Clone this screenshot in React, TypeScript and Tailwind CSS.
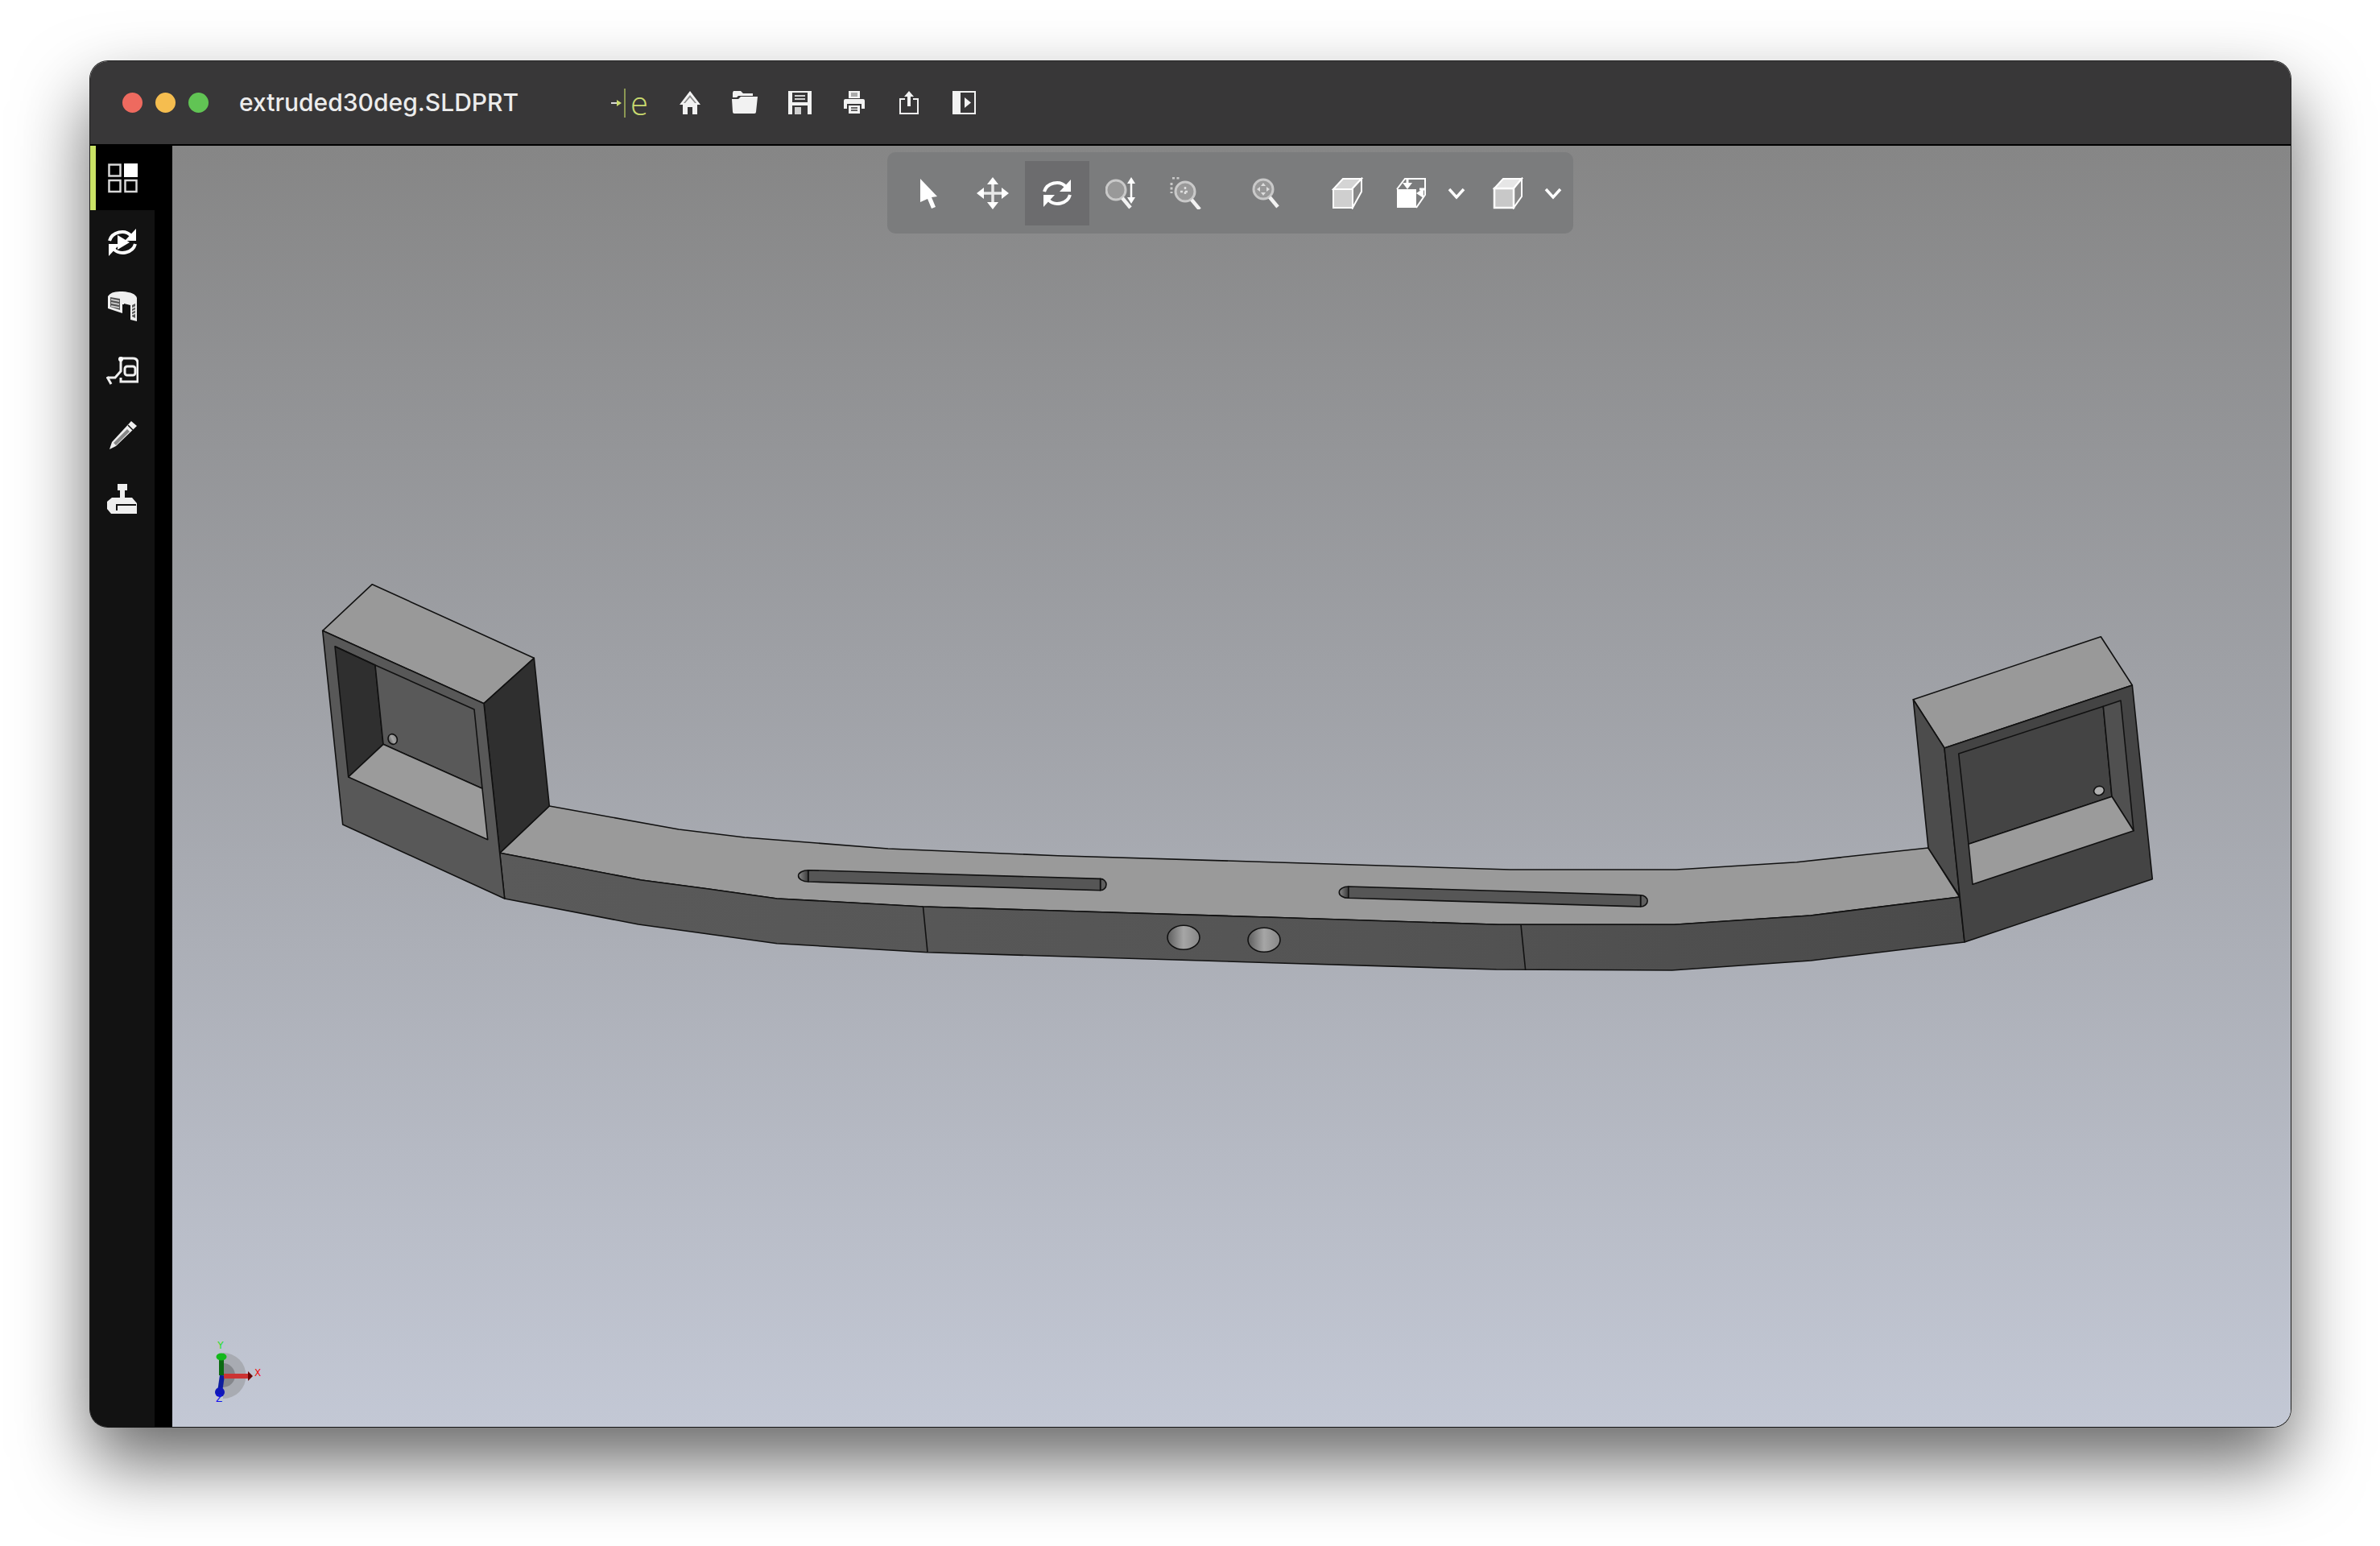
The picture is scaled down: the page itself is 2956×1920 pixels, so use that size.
const edge = { stroke: "#111", strokeWidth: 1.6, strokeLinejoin: "round" as const };

function Rotate({ play }: { play?: boolean }) {
  return (
    <svg viewBox="0 0 40 40" className="h-10 w-10">
      <path d="M4 18C7 7 23 3 31 12" fill="none" stroke="#fff" strokeWidth="4" />
      <polygon points="37,3 37,18 23,18" fill="#fff" />
      <path d="M36 22C33 33 17 37 9 28" fill="none" stroke="#fff" strokeWidth="4" />
      <polygon points="3,37 3,22 17,22" fill="#fff" />
      {play && <polygon points="14,11 29,20 14,29" fill="#fff" />}
    </svg>
  );
}

function Glass({ cx, cy, children }: { cx: number; cy: number; children?: React.ReactNode }) {
  return (
    <>
      <circle cx={cx} cy={cy} r="12" fill="#999" stroke="#c9c9c9" strokeWidth="3" />
      <line x1={cx + 8} y1={cy + 10} x2={cx + 18} y2={cy + 22} stroke="#f2f2f2" strokeWidth="4.5" />
      {children}
    </>
  );
}

const toolIcons = {
  pointer: (
    <svg viewBox="0 0 40 40" className="h-10 w-10">
      <polygon points="10,2 31,24 24,25 29,37 24,39 19,27 10,31" fill="#fff" />
    </svg>
  ),
  move: (
    <svg viewBox="0 0 40 40" className="h-10 w-10">
      <path d="M20 6V34M6 20H34" stroke="#e8e8e8" strokeWidth="3.5" />
      <polygon points="20,0 27,9 13,9" fill="#fff" />
      <polygon points="20,40 27,31 13,31" fill="#fff" />
      <polygon points="0,20 9,13 9,27" fill="#fff" />
      <polygon points="40,20 31,13 31,27" fill="#fff" />
    </svg>
  ),
  zoomFit: (
    <svg viewBox="0 0 40 40" className="h-10 w-10">
      <Glass cx={13} cy={16} />
      <path d="M32 4V28" stroke="#fff" strokeWidth="2.5" />
      <polygon points="32,0 37,8 27,8" fill="#fff" />
      <polygon points="32,33 37,25 27,25" fill="#fff" />
    </svg>
  ),
  zoomArea: (
    <svg viewBox="0 0 40 40" className="h-10 w-10">
      <Glass cx={19} cy={18} />
      <path d="M3 1H14M2 7V20" stroke="#c9c9c9" strokeWidth="3" strokeDasharray="3 2.5" />
      <path d="M13 18H25M19 12V24" stroke="#ddd" strokeWidth="2.5" strokeDasharray="3 3" />
    </svg>
  ),
  zoom: (
    <svg viewBox="0 0 40 40" className="h-10 w-10">
      <Glass cx={16} cy={15} />
      <polygon points="16,7 19,11 13,11" fill="#ddd" />
      <polygon points="16,23 19,19 13,19" fill="#ddd" />
      <polygon points="8,15 12,12 12,18" fill="#ddd" />
      <polygon points="24,15 20,12 20,18" fill="#ddd" />
    </svg>
  ),
  cube: (
    <svg viewBox="0 0 40 40" className="h-10 w-10">
      <polygon points="2,15 14,2 37,2 25,15" fill="#d4d4d4" stroke="#fff" strokeWidth="2" />
      <polygon points="25,15 37,2 37,18 26,38" fill="#888" stroke="#fff" strokeWidth="2" />
      <rect x="2" y="15" width="24" height="23" fill="#cfcfcf" stroke="#fff" strokeWidth="2" />
    </svg>
  ),
  viewBox: (
    <svg viewBox="0 0 40 40" className="h-10 w-10">
      <path d="M2 15L12 2H37V22L26 38" fill="none" stroke="#fff" strokeWidth="2" />
      <rect x="2" y="15" width="24" height="23" fill="#fff" />
      <path d="M15 1V12M30 15H37" stroke="#fff" strokeWidth="3" />
      <polygon points="9,7 21,7 15,15" fill="#fff" />
      <polygon points="26,20 35,14 35,26" fill="#fff" />
    </svg>
  ),
  cubeAlt: (
    <svg viewBox="0 0 40 40" className="h-10 w-10">
      <polygon points="3,14 14,2 37,2 27,14" fill="#e6e6e6" stroke="#fff" strokeWidth="2" />
      <polygon points="27,14 37,2 37,24 27,38" fill="#8a8a8a" stroke="#fff" strokeWidth="2" />
      <rect x="3" y="14" width="24" height="24" fill="#c8c8c8" stroke="#fff" strokeWidth="2.5" />
    </svg>
  ),
};

function Chevron() {
  return (
    <svg viewBox="0 0 24 24" className="h-6 w-6">
      <path d="M3 7L12 17L21 7" fill="none" stroke="#fff" strokeWidth="3.5" />
    </svg>
  );
}

function ToolButton({ icon, active, className }: { icon: React.ReactNode; active?: boolean; className?: string }) {
  return (
    <div className={`flex h-[80px] w-[80px] items-center justify-center ${active ? "bg-[#6c6c6e]" : ""} ${className ?? ""}`}>
      {icon}
    </div>
  );
}

function Toolbar() {
  return (
    <div className="absolute left-[888px] top-[8px] flex h-[101px] w-[852px] items-center rounded-[10px] bg-[#7b7c7d] pl-[11px]">
      <ToolButton icon={toolIcons.pointer} />
      <ToolButton icon={toolIcons.move} />
      <ToolButton icon={<Rotate />} active />
      <ToolButton icon={toolIcons.zoomFit} />
      <ToolButton icon={toolIcons.zoomArea} />
      <ToolButton icon={toolIcons.zoom} className="ml-[20px]" />
      <ToolButton icon={toolIcons.cube} className="ml-[21px]" />
      <ToolButton icon={toolIcons.viewBox} className="-ml-px" />
      <div className="flex w-[32px] justify-center"><Chevron /></div>
      <ToolButton icon={toolIcons.cubeAlt} className="ml-[8px]" />
      <div className="flex w-[32px] justify-center"><Chevron /></div>
    </div>
  );
}

const titleIcons = [
  <svg key="home" viewBox="0 0 28 29" className="h-[29px] w-[28px]">
    <path d="M14 0L27 17H23V29H17V20H11V29H5V17H1Z" fill="#f2f2f2" />
    <path d="M14 5L22 15H20L14 8L8 15H6Z" fill="#8a8a8a" />
  </svg>,
  <svg key="folder" viewBox="0 0 34 28" className="h-[28px] w-[34px]">
    <path d="M3 0H12L15 3H27V6H9L7 8H2V2Z" fill="#f2f2f2" />
    <path d="M1 10H9L12 7H33L31 26Q31 28 29 28H4Q2 28 2 26Z" fill="#f2f2f2" />
  </svg>,
  <svg key="save" viewBox="0 0 29 29" className="h-[29px] w-[29px]">
    <path d="M0 0H29V29H0Z" fill="#f2f2f2" />
    <rect x="5" y="2" width="19" height="12" fill="#383738" />
    <rect x="8" y="5" width="13" height="2" fill="#d0d0d0" />
    <rect x="8" y="9" width="13" height="2" fill="#d0d0d0" />
    <rect x="5" y="18" width="19" height="11" fill="#383738" />
    <rect x="8" y="20" width="8" height="9" fill="#d0d0d0" />
  </svg>,
  <svg key="print" viewBox="0 0 26 28" className="h-[28px] w-[26px]">
    <path d="M6 0H20V9H6Z" fill="#f2f2f2" />
    <rect x="9" y="2" width="8" height="5" fill="#aaa" />
    <path d="M2 10H24Q26 10 26 12V22H22V16H4V22H0V12Q0 10 2 10Z" fill="#f2f2f2" />
    <path d="M6 18H20V28H6Z" fill="#f2f2f2" />
    <path d="M9 21H17M9 24H17" stroke="#383738" strokeWidth="1.5" />
  </svg>,
  <svg key="share" viewBox="0 0 24 29" className="h-[29px] w-[24px]">
    <path d="M12 0L18 7H14V19H10V7H6Z" fill="#f2f2f2" />
    <path d="M7 10H1V28H23V10H17" fill="none" stroke="#f2f2f2" strokeWidth="2" />
  </svg>,
  <svg key="panel" viewBox="0 0 29 29" className="h-[29px] w-[29px]">
    <rect x="1" y="1" width="27" height="27" fill="none" stroke="#f2f2f2" strokeWidth="2" />
    <rect x="1" y="1" width="9" height="27" fill="#f2f2f2" />
    <polygon points="15,8 23,14.500 15,21" fill="#f2f2f2" />
  </svg>,
];

function TitleBar() {
  return (
    <div className="flex h-[105px] shrink-0 items-center border-b-2 border-black bg-[#383738] pl-[40px]">
      <div className="flex gap-[16px]">
        <div className="h-[25px] w-[25px] rounded-full bg-[#ee6a5f]" />
        <div className="h-[25px] w-[25px] rounded-full bg-[#f5bd4f]" />
        <div className="h-[25px] w-[25px] rounded-full bg-[#61c454]" />
      </div>
      <span className="ml-[38px] w-[462px] font-['Inter',sans-serif] text-[30px] font-medium text-[#ececec]">
        extruded30deg.SLDPRT
      </span>
      <div className="flex items-center">
        <svg viewBox="0 0 18 36" className="h-[36px] w-[18px]">
          <path d="M0 18H9" stroke="#d8d8d8" strokeWidth="2" />
          <polygon points="7,14 13,18 7,22" fill="#cbdc6e" />
          <path d="M17 0V36" stroke="#a9b85c" strokeWidth="1.5" />
        </svg>
        <span className="ml-[6px] w-[28px] font-['Open_Sans',sans-serif] text-[40px] font-light leading-none text-[#c8d96f]">e</span>
      </div>
      <div className="ml-[12px] flex">
        {titleIcons.map((icon) => (
          <div key={icon.key} className="flex w-[68px] justify-center">{icon}</div>
        ))}
      </div>
    </div>
  );
}

const sideIcons = [
  <svg key="grid" viewBox="0 0 40 40" className="h-10 w-10">
    <rect x="3.500" y="3.500" width="14" height="14" fill="none" stroke="#d8d8d8" strokeWidth="2.500" />
    <rect x="22" y="2" width="17" height="17" fill="#fff" />
    <rect x="3.500" y="23" width="14" height="14" fill="none" stroke="#d8d8d8" strokeWidth="2.500" />
    <rect x="23.500" y="23" width="14" height="14" fill="none" stroke="#d8d8d8" strokeWidth="2.500" />
  </svg>,
  <Rotate key="sync" play />,
  <svg key="section" viewBox="0 0 40 40" className="h-10 w-10">
    <path d="M2 7Q6 0 20 1Q36 2 38 9V38L30 36L29 20L24 17H20V28L2 22Z" fill="#efefef" />
    <path d="M5 8L17 10V24L5 20Z" fill="#555" />
    <path d="M6 11L16 13M6 15L16 17M6 19L16 21" stroke="#ddd" strokeWidth="1.500" />
    <path d="M32 18L36 16V34L32 32Z" fill="#555" />
    <path d="M32 22L36 20M32 26L36 24M32 30L36 28" stroke="#ddd" strokeWidth="1.500" />
    <path d="M22 16L30 18V36L22 32Z" fill="#121212" />
  </svg>,
  <svg key="measure" viewBox="0 0 40 40" className="h-10 w-10">
    <path d="M2 28H11L18 20V4H33Q39 4 39 10V33H18V28" fill="none" stroke="#efefef" strokeWidth="3" />
    <rect x="23" y="14" width="13" height="11" rx="3" fill="none" stroke="#efefef" strokeWidth="3" />
    <circle cx="18" cy="5" r="3" fill="#fff" />
    <path d="M1 27L6 36" stroke="#efefef" strokeWidth="3" />
  </svg>,
  <svg key="pencil" viewBox="0 0 40 40" className="h-10 w-10">
    <path d="M31 2L38 8L12 33L4 37L7 28Z" fill="#efefef" />
    <path d="M9 29L12 32L29 15L26 12Z" fill="#888" />
    <path d="M27 7L33 13" stroke="#121212" strokeWidth="1.500" />
  </svg>,
  <svg key="stamp" viewBox="0 0 40 40" className="h-10 w-10">
    <rect x="14" y="0" width="12" height="8" fill="#efefef" />
    <rect x="17" y="8" width="6" height="9" fill="#efefef" />
    <path d="M7 17H32L38 24V37H6L1 31V22Z" fill="#efefef" />
    <rect x="12" y="25" width="25" height="8" fill="#121212" />
    <rect x="14" y="27" width="24" height="6" fill="#efefef" />
  </svg>,
];

function Sidebar() {
  return (
    <div className="flex w-[102px] shrink-0 bg-black">
      <div className="flex w-[80px] flex-col bg-[#121212]">
        {sideIcons.map((icon, i) => (
          <div
            key={icon.key}
            className={`flex h-[80px] items-center justify-center ${i === 0 ? "border-l-[7px] border-[#c9e265] bg-black pr-[7px]" : ""}`}
          >
            {icon}
          </div>
        ))}
      </div>
    </div>
  );
}

function Slot({ x1, x2, y1, y2, capL, capR }: { x1: number; x2: number; y1: number; y2: number; capL: number; capR: number }) {
  const h = 14.3;
  return (
    <g>
      <path
        d={`M${x1} ${y1}A${x1 - capL} ${h / 2} 0 0 0 ${x1} ${y1 + h}Z`}
        fill="url(#capGrad)"
        {...edge}
      />
      <path
        d={`M${x2} ${y2}A${capR - x2} ${h / 2} 0 0 1 ${x2} ${y2 + h}Z`}
        fill="#5f5f5f"
        {...edge}
      />
      <polygon points={`${x1},${y1} ${x2},${y2} ${x2},${y2 + h} ${x1},${y1 + h}`} fill="#565656" {...edge} />
    </g>
  );
}

function Triad() {
  return (
    <g>
      <path d="M277 1680A28 28 0 0 1 277 1737Z" fill="#a8abb2" />
      <path d="M277 1693A15 15 0 0 1 277 1723Z" fill="#85878c" />
      <path d="M276 1708L273 1729" stroke="#0d1d9e" strokeWidth="6" />
      <path d="M275 1685V1708" stroke="#0c6a12" strokeWidth="6" />
      <ellipse cx="275" cy="1685" rx="6.500" ry="4.500" fill="#14b81c" />
      <circle cx="273" cy="1729" r="6" fill="#1018b8" />
      <rect x="278" y="1706" width="30" height="6" fill="#c33" />
      <polygon points="308,1703 314,1709 308,1715" fill="#6e0606" />
      <text x="274" y="1675" textAnchor="middle" fontFamily="'DejaVu Sans',sans-serif" fontSize="12" fill="#1fe01f">Y</text>
      <text x="320" y="1709" textAnchor="middle" fontFamily="'DejaVu Sans',sans-serif" fontSize="12" fill="#ee1111">X</text>
      <text x="272" y="1741" textAnchor="middle" fontFamily="'DejaVu Sans',sans-serif" fontSize="12" fill="#1111ee">Z</text>
    </g>
  );
}

function Model() {
  return (
    <svg viewBox="214 181 2631 1591" className="block h-full w-full">
      <defs>
        <linearGradient id="capGrad" x1="0" x2="1" y1="0" y2="0">
          <stop offset="0" stopColor="#8a8a8a" />
          <stop offset="1" stopColor="#3a3a3a" />
        </linearGradient>
        <linearGradient id="beamGrad" gradientUnits="userSpaceOnUse" x1="620" x2="2440" y1="0" y2="0">
          <stop offset="0" stopColor="#5a5a5a" />
          <stop offset="0.6" stopColor="#545454" />
          <stop offset="1" stopColor="#4a4a4a" />
        </linearGradient>
        <linearGradient id="holeGrad" x1="0" x2="1" y1="0" y2="0">
          <stop offset="0" stopColor="#5e5e5e" />
          <stop offset="0.5" stopColor="#a6a6a6" />
          <stop offset="1" stopColor="#868686" />
        </linearGradient>
      </defs>

      {/* beam */}
      <polygon
        points="682.300,1001 843,1030 925,1040 1103,1054 1314,1062.700 1580,1070.700 1875.700,1080 2082,1080 2231.600,1070.700 2395,1053 2433.700,1114 2249,1137 2079.500,1148.300 1861,1148.300 1580,1139.300 1146.500,1126 965,1116 880,1104 796.700,1093 620.700,1059.300"
        fill="#9a9a9a"
        {...edge}
      />
      <polygon
        points="620.700,1059.300 796.700,1093 880,1104 965,1116 1146.500,1126 1580,1139.300 1861,1148.300 2079.500,1148.300 2249,1137 2433.700,1114 2440,1170 2249,1193 2076.600,1205 1858.500,1204 1580,1195.700 1152,1182.700 965,1171.700 880,1160 793,1148 626.700,1116"
        fill="url(#beamGrad)"
        {...edge}
      />
      <line x1="1146.500" y1="1126" x2="1152" y2="1182.700" {...edge} />
      <line x1="1889" y1="1148.700" x2="1894.700" y2="1205" {...edge} />
      <Slot x1={1004} y1={1080.700} x2={1366.600} y2={1091.400} capL={991.600} capR={1374} />
      <Slot x1={1674.800} y1={1101} x2={2037.600} y2={1111.700} capL={1663.300} capR={2046.200} />
      <ellipse cx="1470" cy="1164.300" rx="20" ry="15" fill="url(#holeGrad)" {...edge} />
      <ellipse cx="1570" cy="1167.300" rx="20" ry="15" fill="url(#holeGrad)" {...edge} />

      {/* left box */}
      <polygon points="400.700,783.300 462.300,725.700 663.300,817.300 601,873.700" fill="#999" {...edge} />
      <polygon points="601,873.700 663.300,817.300 682.300,1001 620.700,1059.300" fill="#2f2f2f" {...edge} />
      <polygon points="400.700,783.300 601,873.700 620.700,1059.300 626.700,1116 425.700,1024" fill="#585858" {...edge} />
      <polygon points="416,802.700 466,826 476,924.300 432.700,965" fill="#2f2f2f" {...edge} />
      <polygon points="466,826 589,881 599,979.300 476,924.300" fill="#595959" {...edge} />
      <polygon points="476,924.300 599,979.300 605.700,1042.700 432.700,965" fill="#9b9b9b" {...edge} />
      <line x1="416" y1="802.700" x2="466" y2="826" {...edge} />
      <ellipse cx="487.700" cy="918" rx="5.500" ry="6.500" transform="rotate(-25 487.700 918)" fill="url(#holeGrad)" {...edge} />

      {/* right box */}
      <polygon points="2376.300,868.700 2609.300,790.700 2648.300,851 2415,929" fill="#999" {...edge} />
      <polygon points="2376.300,868.700 2415,929 2434,1113.300 2395,1053.300" fill="#4c4c4c" {...edge} />
      <polygon points="2415,929 2648.300,851 2673.300,1091.700 2440,1170" fill="#444" {...edge} />
      <polygon points="2432.700,936 2612.300,877.300 2623,989.300 2445,1048.300" fill="#444" {...edge} />
      <polygon points="2612.300,877.300 2634,870 2650,1031.700 2623,989.300" fill="#505050" {...edge} />
      <polygon points="2445,1048.300 2623,989.300 2650,1031.700 2450,1098.300" fill="#9b9b9b" {...edge} />
      <ellipse cx="2607" cy="982" rx="6.500" ry="5.500" transform="rotate(-18 2607 982)" fill="#b0b0b0" {...edge} />

      <Triad />
    </svg>
  );
}

export default function App() {
  return (
    <div className="h-[1920px] w-[2956px] overflow-hidden bg-white pl-[112px] pt-[76px]">
      <div className="flex h-[1696px] w-[2733px] flex-col overflow-hidden rounded-[22px] shadow-[0_44px_90px_rgba(0,0,0,0.6),0_0_0_1px_#2a2a2a]">
        <TitleBar />
        <div className="flex min-h-0 flex-1">
          <Sidebar />
          <div className="relative flex-1 bg-linear-to-b from-[#868686] to-[#c3c8d5]">
            <Model />
            <Toolbar />
          </div>
        </div>
      </div>
    </div>
  );
}
